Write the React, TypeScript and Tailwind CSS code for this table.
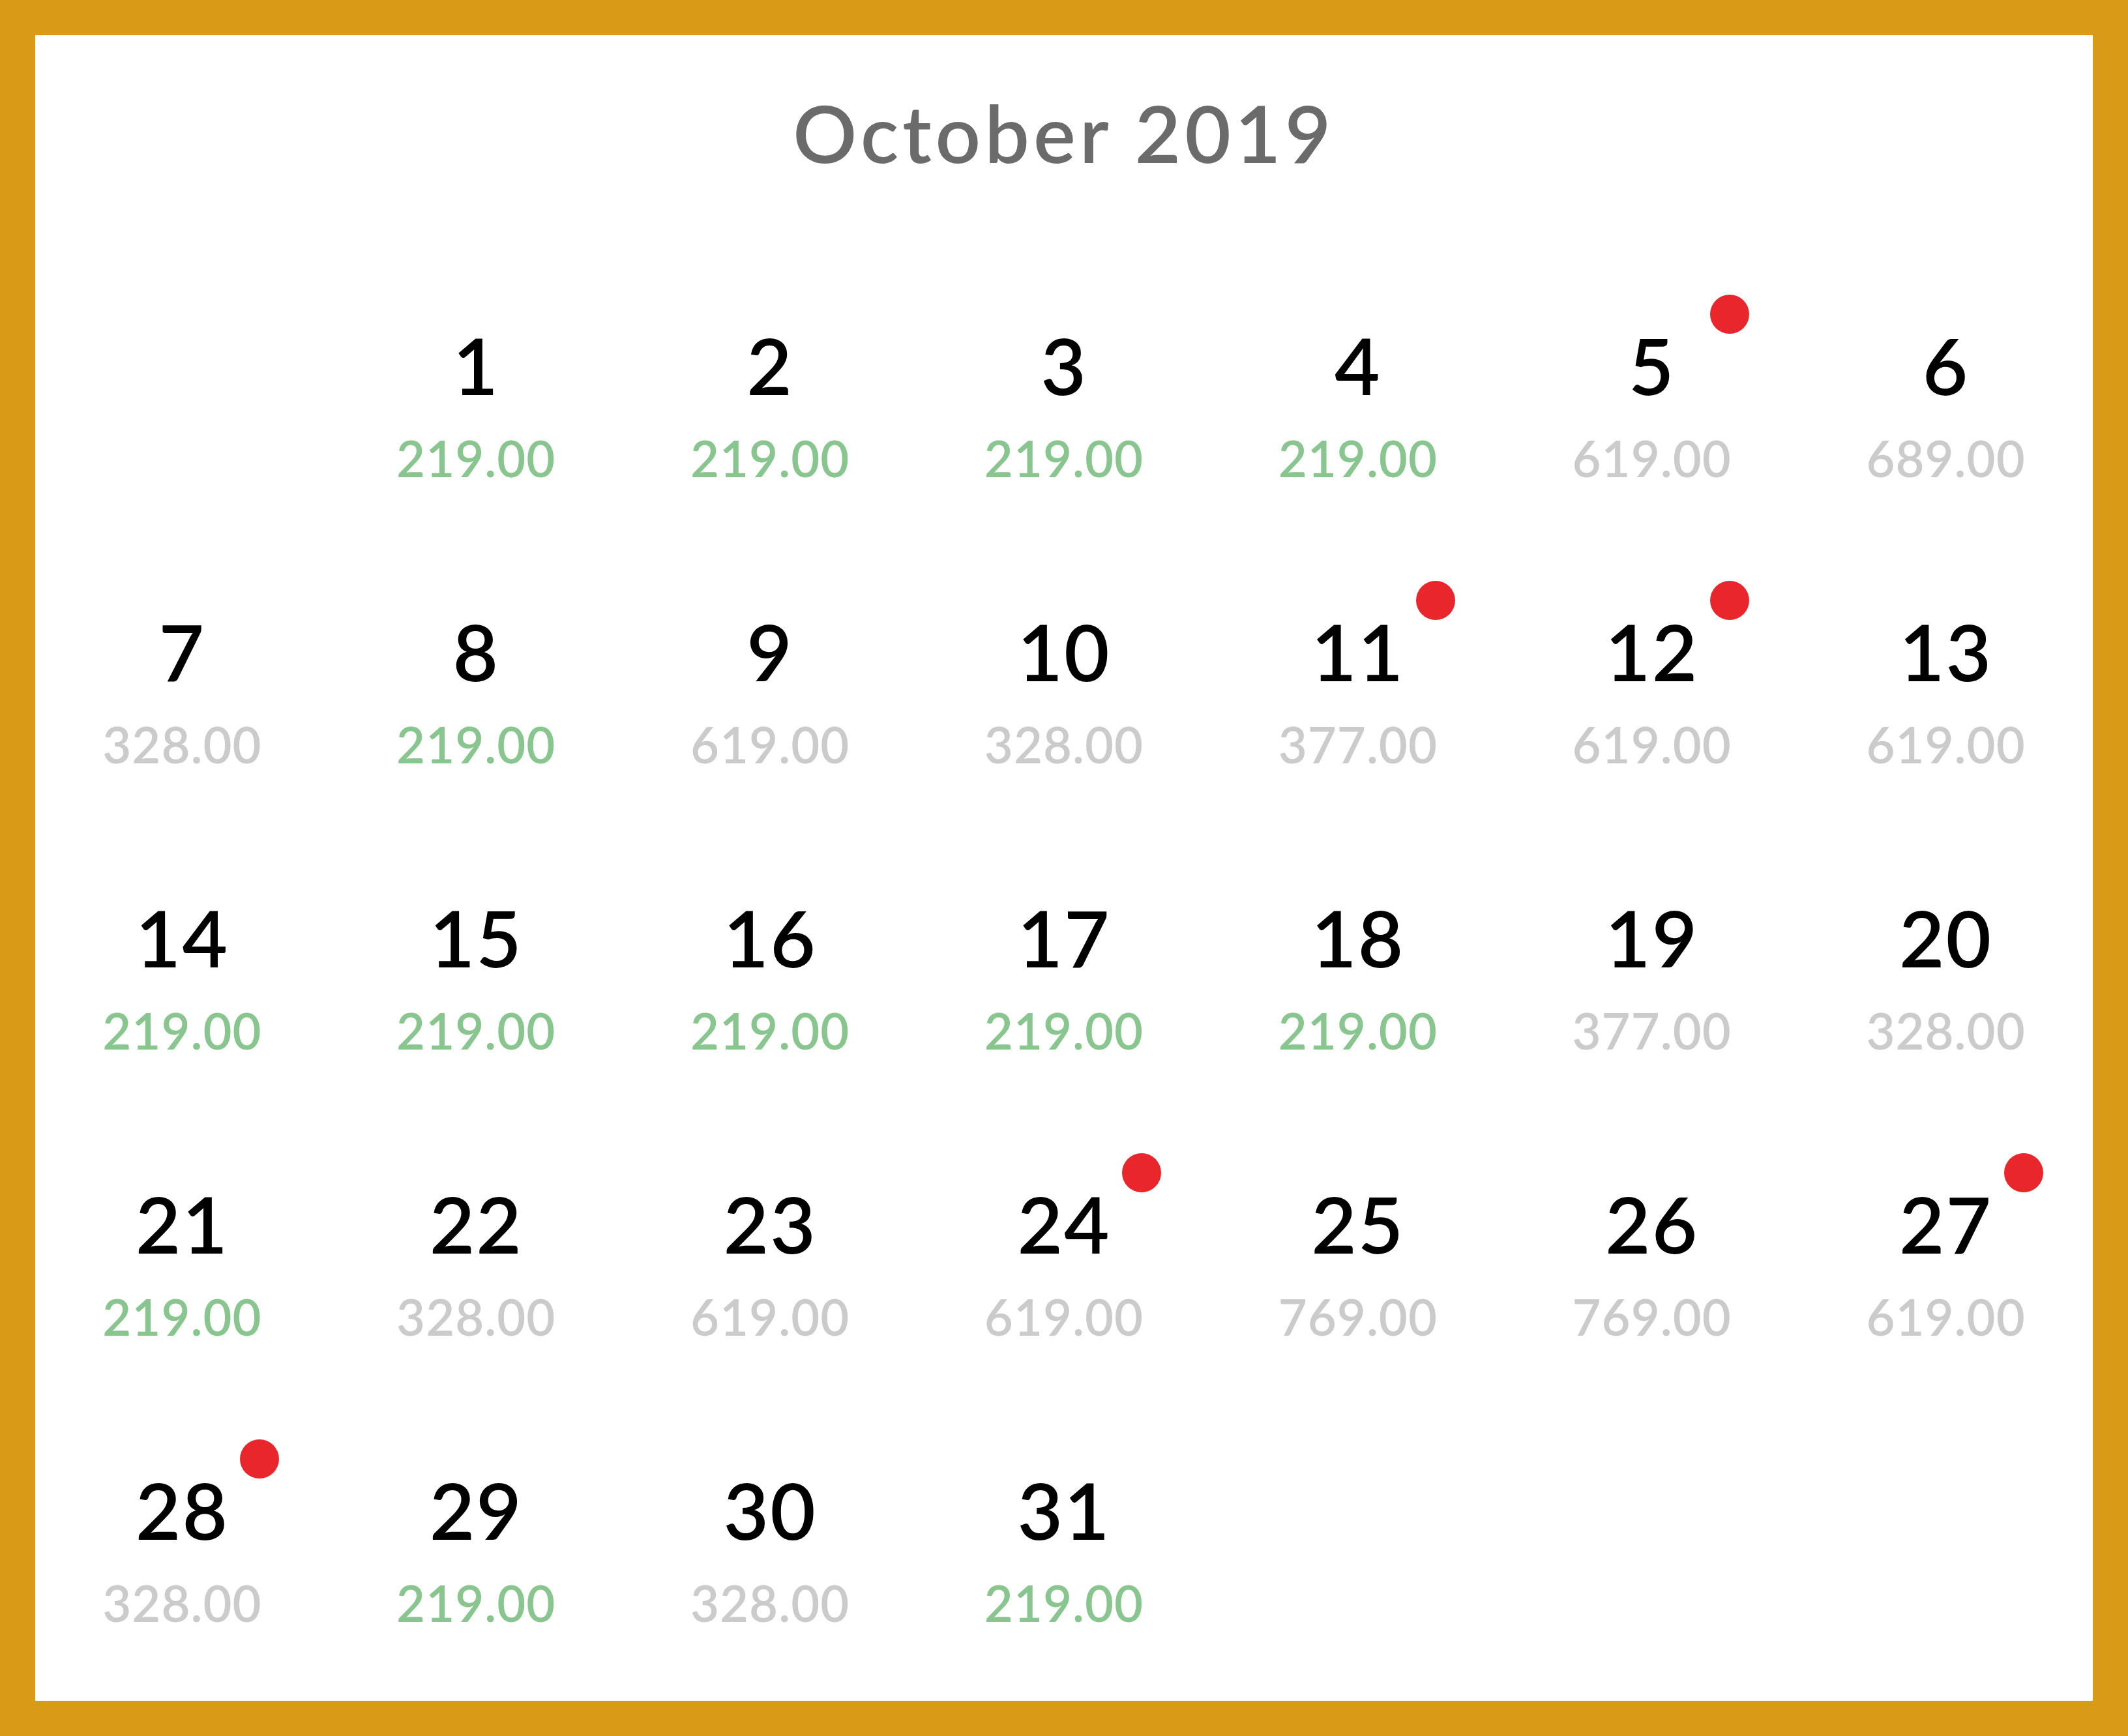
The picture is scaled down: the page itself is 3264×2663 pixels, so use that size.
import React from "react";

type Day = { d: number; p: string; g?: boolean; dot?: boolean } | null;

const days: Day[] = [
  null,
  { d: 1, p: "219.00", g: true },
  { d: 2, p: "219.00", g: true },
  { d: 3, p: "219.00", g: true },
  { d: 4, p: "219.00", g: true },
  { d: 5, p: "619.00", dot: true },
  { d: 6, p: "689.00" },
  { d: 7, p: "328.00" },
  { d: 8, p: "219.00", g: true },
  { d: 9, p: "619.00" },
  { d: 10, p: "328.00" },
  { d: 11, p: "377.00", dot: true },
  { d: 12, p: "619.00", dot: true },
  { d: 13, p: "619.00" },
  { d: 14, p: "219.00", g: true },
  { d: 15, p: "219.00", g: true },
  { d: 16, p: "219.00", g: true },
  { d: 17, p: "219.00", g: true },
  { d: 18, p: "219.00", g: true },
  { d: 19, p: "377.00" },
  { d: 20, p: "328.00" },
  { d: 21, p: "219.00", g: true },
  { d: 22, p: "328.00" },
  { d: 23, p: "619.00" },
  { d: 24, p: "619.00", dot: true },
  { d: 25, p: "769.00" },
  { d: 26, p: "769.00" },
  { d: 27, p: "619.00", dot: true },
  { d: 28, p: "328.00", dot: true },
  { d: 29, p: "219.00", g: true },
  { d: 30, p: "328.00" },
  { d: 31, p: "219.00", g: true },
];

export default function App() {
  return (
    <div
      className="w-[3264px] h-[2663px] bg-[#D99A18] p-[54px]"
      style={{ fontFamily: "Lato, 'Open Sans', sans-serif" }}
    >
      <div className="w-full h-full bg-white flex flex-col">
        <div className="mt-[88px] text-center text-[122px] leading-[122px] font-semibold text-[#6b6b6b] tracking-[6px]">
          October 2019
        </div>
        <div className="mt-[236px] grid grid-cols-7 gap-y-[198px]">
          {days.map((c, i) => (
            <div key={i} className="relative flex flex-col items-center">
              {c && (
                <>
                  <div className="text-[120px] leading-[120px] font-semibold text-black tracking-[2px]">
                    {c.d}
                  </div>
                  <div
                    className={
                      "mt-[45px] text-[76px] leading-[76px] font-semibold tracking-[1px] " +
                      (c.g ? "text-[#89C58E]" : "text-[#CBCBCB]")
                    }
                  >
                    {c.p}
                  </div>
                  {c.dot && (
                    <div className="absolute top-[-48px] left-[calc(50%+89px)] w-[60px] h-[60px] rounded-full bg-[#E8262B]" />
                  )}
                </>
              )}
            </div>
          ))}
        </div>
      </div>
    </div>
  );
}
